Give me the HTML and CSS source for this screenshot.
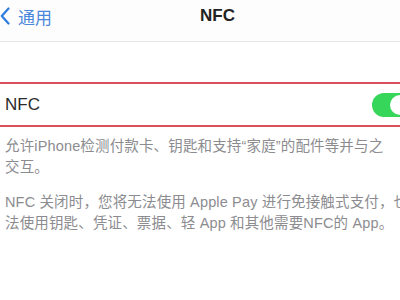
FILE: index.html
```html
<!DOCTYPE html>
<html lang="zh-CN">
<head>
<meta charset="utf-8">
<link rel="stylesheet" href="styles.css">
</head>
<body>
<div class="screen">
  <header class="nav">
    <div class="back">
      <svg class="chev" width="10" height="18" viewBox="0 0 10 18"><path d="M8.5 1.5 L1.8 9 L8.5 16.5" fill="none" stroke="#2f7be0" stroke-width="2.2" stroke-linecap="round" stroke-linejoin="round"/></svg>
      <span class="back-label">通用</span>
    </div>
    <div class="title">NFC</div>
  </header>
  <div class="gap"></div>
  <div class="row">
    <span class="row-label">NFC</span>
    <span class="toggle"><span class="knob"></span></span>
  </div>
  <div class="notes">
    <p class="note"><span class="line">允许iPhone检测付款卡、钥匙和支持“家庭”的配件等并与之</span><span class="line">交互。</span></p>
    <p class="note"><span class="line">NFC 关闭时，您将无法使用 Apple Pay 进行免接触式支付，也</span><span class="line">法使用钥匙、凭证、票据、轻 App 和其他需要NFC的 App。</span></p>
  </div>
</div>
</body>
</html>
```
FILE: styles.css
```css
html, body { margin: 0; padding: 0; background: #fff; }
.screen {
  width: 400px;
  height: 300px;
  overflow: hidden;
  font-family: "Liberation Sans", "Noto Sans CJK SC", sans-serif;
  background: #fff;
}
.nav {
  height: 41px;
  border-bottom: 1px solid #e6e6e8;
  display: grid;
  grid-template-columns: 200px auto;
  align-items: center;
  background: #fdfdfd;
}
.back { display: flex; align-items: center; gap: 8px; margin-top: -9px; }
.chev { display: block; }
.back-label { font-size: 17px; color: #4a86db; }
.title { font-size: 17px; font-weight: bold; color: #222; margin-top: -9px; }
.gap { height: 40px; }
.row {
  height: 41px;
  border-top: 2px solid #d9505c;
  border-bottom: 2px solid #d9505c;
  display: flex;
  align-items: center;
  padding-left: 5px;
  overflow: hidden;
}
.row-label { font-size: 17px; color: #2a2a2a; }
.toggle {
  margin-left: auto;
  margin-right: -12px;
  width: 40px;
  height: 24px;
  border-radius: 12px;
  background: #35d65a;
  position: relative;
  flex: none;
}
.knob {
  position: absolute;
  right: 2px;
  top: 2px;
  width: 20px;
  height: 20px;
  border-radius: 50%;
  background: #fff;
}
.notes { padding: 9px 0 0 5px; }
.note { margin: 0 0 14px; font-size: 14.5px; letter-spacing: 0.15px; line-height: 21px; color: #8c8c90; }
.line { display: block; white-space: nowrap; }
```
